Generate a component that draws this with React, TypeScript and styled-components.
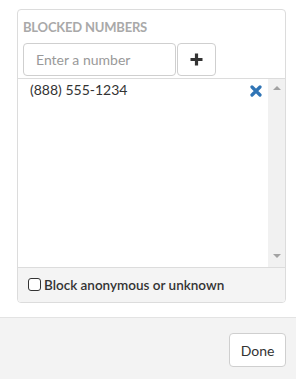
import React from 'react';
import styled, { createGlobalStyle } from 'styled-components';

const GlobalStyle = createGlobalStyle`
  html, body {
    margin: 0;
    padding: 0;
    background: #fff;
  }

  body {
    font-family: Lato, "Open Sans", "Liberation Sans", sans-serif;
    color: #333;
  }
`;

const Page = styled.div`
  display: flex;
  flex-direction: column;
  height: 379px;
`;

const Content = styled.div`
  flex: 1;
  padding: 9px 10px 0 17px;
`;

const Panel = styled.div`
  border: 1px solid #dcdcdc;
  border-radius: 4px;
  overflow: hidden;
  display: flex;
  flex-direction: column;
`;

const PanelHead = styled.div`
  padding: 10px 5px 2px 5px;
`;

const Title = styled.div`
  font-size: 13px;
  font-weight: 700;
  color: #a9a9a9;
  letter-spacing: -0.2px;
  line-height: 14px;
  margin-bottom: 9px;
`;

const InputRow = styled.div`
  display: flex;
  gap: 1px;
`;

const NumberInput = styled.input`
  box-sizing: border-box;
  width: 153px;
  height: 33px;
  border: 1px solid #cfcfcf;
  border-radius: 4px;
  padding: 0 12px;
  font-family: inherit;
  font-size: 14px;
  color: #333;
  outline: none;

  &::placeholder {
    color: #999;
  }
`;

const AddButton = styled.button`
  box-sizing: border-box;
  width: 39px;
  height: 33px;
  border: 1px solid #cfcfcf;
  border-radius: 4px;
  background: #fff;
  display: flex;
  align-items: center;
  justify-content: center;
  padding: 0;
`;

const ListArea = styled.div`
  display: flex;
  height: 188px;
  border-top: 1px solid #dcdcdc;
`;

const List = styled.div`
  flex: 1;
  padding: 2px 6px 0 12px;
`;

const Item = styled.div`
  display: flex;
  align-items: center;
  justify-content: space-between;
  height: 16px;
  font-size: 14px;
  color: #333;
`;

const RemoveButton = styled.span`
  display: flex;
  width: 12px;
  height: 12px;
  margin-top: 4px;
`;

const ScrollTrack = styled.div`
  width: 17px;
  background: #f1f1f1;
  display: flex;
  flex-direction: column;
  justify-content: space-between;
  align-items: center;
  padding: 7px 0 9px;
  box-sizing: border-box;
`;

const Arrow = styled.span<{ $down?: boolean }>`
  width: 0;
  height: 0;
  border-left: 4px solid transparent;
  border-right: 4px solid transparent;
  ${p => p.$down ? 'border-top: 4px solid #a3a3a3;' : 'border-bottom: 4px solid #a3a3a3;'}
`;

const PanelFoot = styled.label`
  display: flex;
  align-items: center;
  gap: 3px;
  height: 34px;
  padding: 0 10px;
  background: #f4f4f4;
  border-top: 1px solid #dcdcdc;
  font-size: 13.5px;
  font-weight: 600;
  color: #333;
`;

const CheckBox = styled.span`
  box-sizing: border-box;
  width: 13px;
  height: 13px;
  border: 1px solid #333;
  border-radius: 3px;
  background: #fff;
  margin-bottom: 1px;
`;

const Footer = styled.div`
  height: 62px;
  box-sizing: border-box;
  border-top: 1px solid #e3e3e3;
  background: #f3f3f3;
  display: flex;
  justify-content: flex-end;
  align-items: flex-start;
  padding: 15px 10px 0;
`;

const DoneButton = styled.button`
  box-sizing: border-box;
  width: 57px;
  height: 34px;
  border: 1px solid #cfcfcf;
  border-radius: 4px;
  background: #fff;
  font-family: inherit;
  font-size: 14px;
  color: #333;
`;

const blocked = ['(888) 555-1234'];

export default function App() {
  return (
    <Page>
      <GlobalStyle />
      <Content>
        <Panel>
          <PanelHead>
            <Title>BLOCKED NUMBERS</Title>
            <InputRow>
              <NumberInput placeholder="Enter a number" />
              <AddButton>
                <svg width="15" height="15" viewBox="0 0 15 15">
                  <path d="M7.5 1.5v12M1.5 7.5h12" stroke="#333" strokeWidth="3.2" />
                </svg>
              </AddButton>
            </InputRow>
          </PanelHead>
          <ListArea>
            <List>
              {blocked.map(num => (
                <Item key={num}>
                  {num}
                  <RemoveButton>
                    <svg width="12" height="12" viewBox="0 0 12 12">
                      <path d="M2 2l8 8M10 2l-8 8" stroke="#2f74b5" strokeWidth="3.2" strokeLinecap="round" />
                    </svg>
                  </RemoveButton>
                </Item>
              ))}
            </List>
            <ScrollTrack>
              <Arrow />
              <Arrow $down />
            </ScrollTrack>
          </ListArea>
          <PanelFoot>
            <CheckBox />
            Block anonymous or unknown
          </PanelFoot>
        </Panel>
      </Content>
      <Footer>
        <DoneButton>Done</DoneButton>
      </Footer>
    </Page>
  );
}
